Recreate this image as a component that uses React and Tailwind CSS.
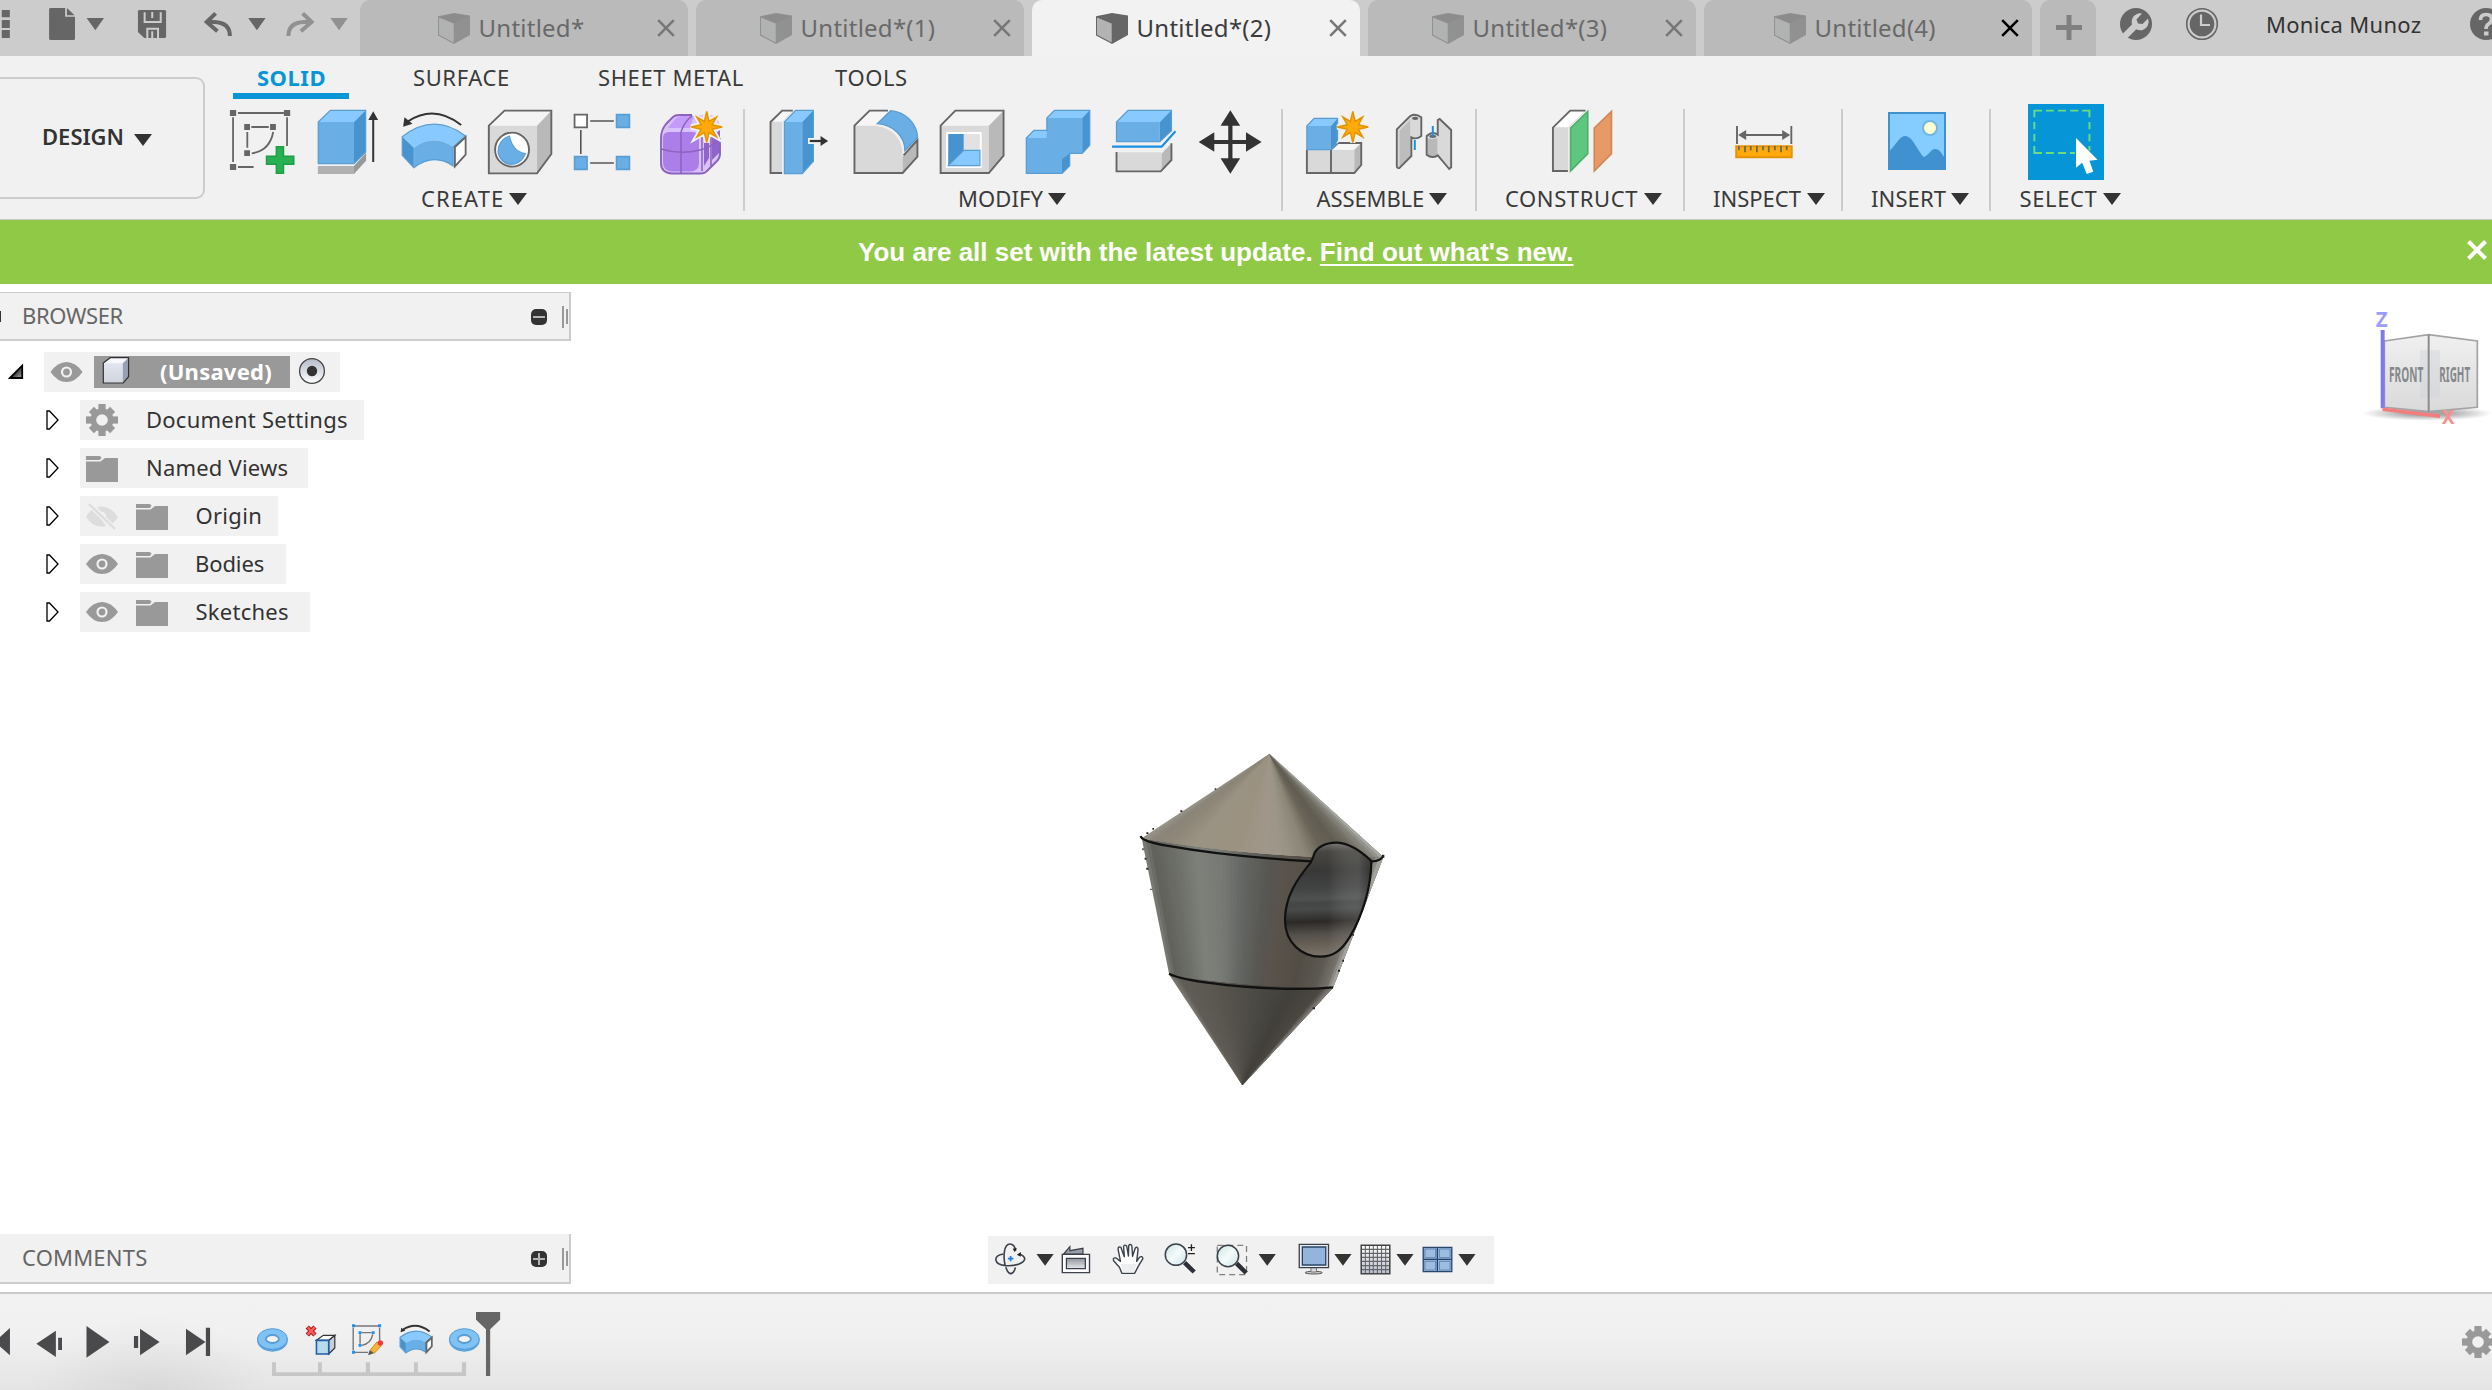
import React from 'react';

/* ---------- drawing helpers ---------- */

// An svg whose viewBox uses window coordinates, so neighbouring icons share one grid.
function Pic({ x, y, w, h, children, className = '' }) {
  return (
    <svg
      viewBox={`${x} ${y} ${w} ${h}`}
      width={w}
      height={h}
      fill="none"
      className={`block shrink-0 [&_*]:[vector-effect:non-scaling-stroke] ${className}`}
    >
      {children}
    </svg>
  );
}
const A = ({ children }) => <g transform="scale(.446429 .333333)">{children}</g>;
const B = ({ children }) => <g transform="translate(700 0) scale(.446429 .333333)">{children}</g>;
const C = ({ children }) => <g transform="translate(1300 0) scale(.382653 .333333)">{children}</g>;
const D = ({ children }) => <g transform="translate(1892 0) scale(.382653 .333333)">{children}</g>;
const E = ({ children }) => <g transform="translate(0 280) scale(.382653 .333333)">{children}</g>;
const H = ({ children }) => <g transform="translate(0 1220) scale(.382653 .333333)">{children}</g>;
const N = ({ children }) => <g transform="translate(970 1220) scale(.344388 .333333)">{children}</g>;

const GR = '#666666';
const BF = '#69afe5';
const BT = '#88caff';
const BS = '#4693d0';
const BL = '#5a9dd2';

function starPath(cx, cy) {
  const pts = [];
  for (let i = 0; i < 16; i++) {
    const r = i % 2 ? 6 : i % 4 === 0 ? 15.5 : 14;
    const a = (i * Math.PI) / 8 - Math.PI / 2;
    pts.push(`${(cx + r * Math.cos(a)).toFixed(2)} ${(cy + r * Math.sin(a)).toFixed(2)}`);
  }
  return `M${pts.join('L')}Z`;
}
const Star = ({ cx, cy }) => (
  <>
    <path d={starPath(cx, cy)} stroke="#f1f1f1" strokeWidth="5" />
    <path d={starPath(cx, cy)} fill="#ffaa0a" stroke="#e59400" strokeWidth="1.5" />
  </>
);

const Caret = ({ className = 'text-[#333333]' }) => (
  <svg width="18" height="12" viewBox="0 0 18 12" className={`block shrink-0 ${className}`}>
    <path d="M0 0H18L9 12Z" fill="currentColor" />
  </svg>
);

/* ---------- title bar ---------- */

const TABS = [
  { name: 'Untitled*', pad: 'pl-[78px]' },
  { name: 'Untitled*(1)', pad: 'pl-[64px]' },
  { name: 'Untitled*(2)', pad: 'pl-[64px]', active: true },
  { name: 'Untitled*(3)', pad: 'pl-[64px]' },
  { name: 'Untitled(4)', pad: 'pl-[70px]', darkClose: true },
];

function DocTab({ name, pad, active, darkClose }) {
  return (
    <div
      className={`mr-2 flex h-14 w-[328px] shrink-0 items-start rounded-t-[10px] pr-[13px] ${pad} ${
        active ? 'bg-[#f2f2f2] text-[#3c3c3c]' : 'bg-[#bababa] text-[#696969]'
      }`}
    >
      <svg width="32" height="31" viewBox="0 0 32 31" className="mt-[13px] shrink-0">
        <path d="M0 3.2L16 0L32 2.6V22L16 31L0 22.5Z" fill={active ? '#666' : '#919191'} />
        <path d="M1 4.5L15.7 10.5V29.4L1 21.8Z" fill={active ? '#b3b3b3' : '#b1b3b2'} />
        <path d="M1 4L16 .8L31 3.2L16 10.2Z" fill={active ? '#666' : '#8c8c8c'} />
      </svg>
      <span className="ml-[8.500px] mt-[11px] text-2xl leading-[34px] tracking-[0.25px]">{name}</span>
      <svg width="18" height="18" viewBox="0 0 18 18" className="ml-auto mt-[19px] shrink-0">
        <path d="M1.2 1.2L16.8 16.8M16.8 1.2L1.2 16.8" stroke={darkClose ? '#000' : '#777'} strokeWidth="2.6" />
      </svg>
    </div>
  );
}

function TitleBar() {
  return (
    <div className="flex h-14 shrink-0 overflow-hidden bg-[#cccccc]">
      <Pic x={0} y={0} w={30} h={56}>
        <A><path d="M4 30H22V52H4ZM4 60H22V84H4ZM4 90H22V114H4Z" fill={GR} /></A>
      </Pic>
      <Pic x={30} y={0} w={90} h={56}>
        <A>
          <path d="M114 24H146V50H168V116Q168 120 164 120H114Q110 120 110 116V28Q110 24 114 24Z" fill={GR} />
          <path d="M150 24L167 46H150Z" fill={GR} />
          <path d="M194 54H233L213.500 91Z" fill={GR} />
        </A>
      </Pic>
      <Pic x={120} y={0} w={70} h={56}>
        <A>
          <path d="M309 34Q309 30 313 30H368Q372 30 372 34V110Q372 114 368 114H323L309 96Z" fill={GR} />
          <path d="M324 37V66H360V37M341 36V54M330 114V86H354V114M341 94V114" stroke="#ccc" strokeWidth="2" />
        </A>
      </Pic>
      <Pic x={190} y={0} w={90} h={56}>
        <A>
          <path d="M483 40L463 66L487 94M464 66H480Q515 68 515 108" stroke={GR} strokeWidth="4" />
          <path d="M556 54H595L575.500 91Z" fill={GR} />
        </A>
      </Pic>
      <Pic x={280} y={0} w={80} h={56}>
        <A>
          <path d="M678 40L698 66L674 94M697 66H681Q646 68 646 108" stroke="#919191" strokeWidth="4" />
          <path d="M740 54H779L759.500 91Z" fill="#919191" />
        </A>
      </Pic>
      {TABS.map((t) => (
        <DocTab key={t.name} {...t} />
      ))}
      <div className="flex h-14 w-14 shrink-0 justify-center rounded-t-[10px] bg-[#bababa] pl-0.5 pt-[15px]">
        <svg width="26" height="25" viewBox="0 0 26 25"><path d="M10.500 0H15.500V10H26V15H15.500V25H10.500V15H0V10H10.500Z" fill="#808080" /></svg>
      </div>
      <Pic x={2096} y={0} w={70} h={56}>
        <circle cx="2136" cy="24" r="16" fill={GR} />
        <path d="M2123 38L2135 26" stroke="#ccc" strokeWidth="6.500" strokeLinecap="round" />
        <path d="M2142 13.500L2136.500 19.500L2138 23.500L2142.500 24L2148 18.500A8.500 8.500 0 1 1 2142 13.500Z" fill="#ccc" />
      </Pic>
      <Pic x={2166} y={0} w={100} h={56}>
        <circle cx="2202" cy="24" r="15.300" stroke={GR} strokeWidth="1.600" />
        <circle cx="2202" cy="24" r="12.300" fill={GR} />
        <path d="M2201 14.500V25H2210" stroke="#ccc" strokeWidth="2.200" />
      </Pic>
      <span className="mt-[7px] w-[204px] shrink-0 text-[22px] leading-[34px] tracking-[0.3px] text-[#333333]">Monica Munoz</span>
      <Pic x={2470} y={0} w={22} h={56}>
        <circle cx="2486" cy="24" r="16" fill={GR} />
        <path d="M2480.500 20Q2480.500 14.500 2486 14.500Q2491.500 14.500 2491.500 19Q2491.500 22 2488.500 24Q2486 25.500 2486 29" stroke="#ccc" strokeWidth="3.600" />
        <path d="M2484 31.500H2488.500V35.500H2484Z" fill="#ccc" />
      </Pic>
    </div>
  );
}

/* ---------- ribbon icons ---------- */

const SketchIcon = () => (
  <Pic x={205} y={104} w={105} h={78}>
    <A>
      <path d="M533 339H636M522 352V486M643 352V438M533 501H568M563 381H602M554 396V443M612 396C607 432 590 455 564 460" stroke={GR} strokeWidth="1.800" />
      <path d="M515 330H529V348H515ZM636 330H650V348H636ZM515 492H529V510H515ZM547 372H560V390H547ZM605 372H618V390H605ZM547 451H560V468H547Z" fill={GR} />
      <path d="M619 440H635V469H658V493H635V520H619V493H597V469H619Z" fill="#28b052" stroke="#1f9e46" strokeWidth="1.500" />
    </A>
  </Pic>
);
const ExtrudeIcon = () => (
  <Pic x={310} y={104} w={82} h={78}>
    <A>
      <path d="M712 498H793V522H712Z" fill="#b1b1b1" />
      <path d="M793 498L820 458V482L793 522Z" fill="#999" />
      <path d="M713 366H793V491H713Z" fill={BF} />
      <path d="M713 366L740 331H819L793 366Z" fill={BT} />
      <path d="M793 366L819 331V456L793 491Z" fill={BS} />
      <path d="M713 366L740 331H819V456L793 491H713Z" stroke={BL} strokeWidth="1.300" />
      <path d="M836 355V486" stroke="#333" strokeWidth="2" />
      <path d="M836 334L847 360H825Z" fill="#333" />
    </A>
  </Pic>
);
const RevolveShape = () => (
  <>
    <path d="M901 410Q972 336 1043 408L1015 441Q972 400 927 443Z" fill={BT} />
    <path d="M901 410L927 443V503L901 466Z" fill={BS} />
    <path d="M927 443Q972 400 1015 441V498Q972 458 927 503Z" fill={BF} />
    <path d="M901 410Q972 336 1043 408L1015 441V498Q972 458 927 503L901 466Z" stroke={BL} strokeWidth="1.200" />
    <path d="M1019 441L1043 411V464L1019 499Z" fill="#fff" stroke={GR} strokeWidth="1.800" />
    <path d="M1033 375Q973 312 914 364" stroke="#333" strokeWidth="2" />
    <path d="M903 380L906 352L924 371Z" fill="#333" />
  </>
);
const RevolveIcon = () => (
  <Pic x={392} y={104} w={86} h={78}><A><RevolveShape /></A></Pic>
);
const HoleIcon = () => (
  <Pic x={478} y={104} w={86} h={78}>
    <A>
      <path d="M1095 377L1130 332H1235L1203 377Z" fill="#f4f4f4" />
      <path d="M1095 377H1203V520H1095Z" fill="#d9d9d9" />
      <path d="M1203 377L1235 332V462L1203 520Z" fill="#b9b9b9" />
      <path d="M1095 377L1130 332H1235V462L1203 520H1095Z" stroke={GR} strokeWidth="1.900" />
      <ellipse cx="1147" cy="449" rx="38" ry="51" fill="#fff" stroke={GR} strokeWidth="1.900" />
      <path d="M1141 408C1146 440 1158 456 1177 461C1166 495 1141 503 1124 480C1108 456 1117 418 1141 408Z" fill={BF} stroke={BL} strokeWidth="1.200" />
    </A>
  </Pic>
);
const PatternIcon = () => (
  <Pic x={564} y={104} w={82} h={78}>
    <A>
      <path d="M1287 344H1315V382H1287Z" fill="#fff" stroke={GR} strokeWidth="1.800" />
      <path d="M1322 363H1375M1301 390V462M1322 489H1375" stroke="#555" strokeWidth="1.600" />
      <path d="M1381 344H1410V382H1381ZM1287 470H1315V508H1287ZM1381 470H1410V508H1381Z" fill={BF} stroke={BL} strokeWidth="1.600" />
    </A>
  </Pic>
);
const FormIcon = () => (
  <Pic x={646} y={104} w={97} h={78}>
    <path d="M661 138Q661 130 666 124L673 117Q675 115 679 115H712Q720 118 720 128V154Q720 158 717 161L707 171Q705 173.500 700 173.500H672Q661 173 661 163Z" fill="#d9c2fb" />
    <path d="M663 138Q663 132 669 132H692Q699 132 699 138V163Q699 171.500 690 171.500H672Q663 171 663 162Z" fill="#ab7eea" />
    <path d="M668 128L675 119Q678 116 682 116H694L690 128Z" fill="#c49afb" />
    <path d="M704 139L709 135V158L704 166ZM712 137L720 130V152L712 160Z" fill="#9064cc" />
    <path d="M661 149Q680 155 700 150Q712 147 720 139M681 132V173M681 132Q684 122 692 116M702 136V171M711 134V166" stroke="#8a63bf" strokeWidth="1.500" />
    <path d="M661 138Q661 130 666 124L673 117Q675 115 679 115H692M720 138V154Q720 158 717 161L707 171Q705 173.500 700 173.500H672Q661 173 661 163V138" stroke="#8a63bf" strokeWidth="1.900" />
    <Star cx={706.700} cy={127} />
  </Pic>
);
const PressPullIcon = () => (
  <Pic x={745} y={104} w={95} h={78}>
    <B>
      <path d="M158 366L184 332H208L184 366V519H158Z" fill="#d9d9d9" />
      <path d="M160 365L185 334H206L184 365Z" fill="#f6f6f6" />
      <path d="M208 332H184L158 366V519H184" stroke={GR} strokeWidth="1.900" />
      <path d="M189 366H229V521H189Z" fill={BF} />
      <path d="M189 366L214 331H254L229 366Z" fill={BT} />
      <path d="M229 366L254 331V484L229 521Z" fill={BS} />
      <path d="M189 366L214 331H254V484L229 521H189Z" stroke={BL} strokeWidth="1.200" />
      <path d="M242 423H276" stroke="#f1f1f1" strokeWidth="6" />
      <path d="M246 423H274" stroke="#333" strokeWidth="2.200" />
      <path d="M287 423L270 408V438Z" fill="#333" />
    </B>
  </Pic>
);
const FilletIcon = () => (
  <Pic x={840} y={104} w={90} h={78}>
    <B>
      <path d="M346 377L380 332H421L396 377Z" fill="#f6f6f6" />
      <path d="M346 377H394Q453 390 454 468V519H346Z" fill="#d9d9d9" />
      <path d="M454 470L487 422V470L454 519Z" fill="#b9b9b9" />
      <path d="M421 332H380L346 377V519H454L487 470V420L456 466" stroke={GR} strokeWidth="1.900" />
      <path d="M397 371L427 332C462 336 487 374 487 413L459 452C459 408 432 374 397 371Z" fill={BF} stroke={BL} strokeWidth="1.300" />
    </B>
  </Pic>
);
const ShellIcon = () => (
  <Pic x={930} y={104} w={84} h={78}>
    <B>
      <path d="M539 377L572 332H680L647 377Z" fill="#f4f4f4" />
      <path d="M539 377H647V519H539Z" fill="#d9d9d9" />
      <path d="M647 377L680 332V467L647 519Z" fill="#b9b9b9" />
      <path d="M539 377L572 332H680V467L647 519H539Z" stroke={GR} strokeWidth="1.900" />
      <path d="M551 396H631V504H551Z" fill="#fff" />
      <path d="M556 402H591V451L556 497Z" fill={BS} />
      <path d="M591 402H627V451H591Z" fill="#e2e2e2" />
      <path d="M556 497L591 451H627V497Z" fill={BT} stroke={BL} strokeWidth="1.200" />
    </B>
  </Pic>
);
const CombineIcon = () => (
  <Pic x={1014} y={104} w={90} h={78}>
    <B>
      <path d="M731 414L748 391H777V354L794 331H873V436L856 460H828V497L811 520H731Z" fill={BF} />
      <path d="M731 414L748 391H777L776 414ZM777 354L794 331H873L857 354Z" fill={BT} />
      <path d="M857 354L873 331V436L857 460ZM811 478L828 460V497L811 520Z" fill={BS} />
      <path d="M731 414L748 391H777V354L794 331H873V436L856 460H828V497L811 520H731Z" stroke={BL} strokeWidth="1.300" />
    </B>
  </Pic>
);
const SplitIcon = () => (
  <Pic x={1104} y={104} w={82} h={78}>
    <B>
      <path d="M933 366H1030V425H933Z" fill={BF} />
      <path d="M933 366L959 331H1056L1030 366Z" fill={BT} />
      <path d="M1030 366L1056 331V392L1030 425Z" fill={BS} />
      <path d="M933 366L959 331H1056V392L1030 425H933Z" stroke={BL} strokeWidth="1.300" />
      <path d="M923 440H1034L1065 394" stroke="#1b8fe0" strokeWidth="2.200" />
      <path d="M933 457H1034V514H933Z" fill="#d9d9d9" />
      <path d="M1034 461L1056 430V480L1034 514Z" fill="#b9b9b9" />
      <path d="M933 456V514H1032L1056 480V430" stroke={GR} strokeWidth="1.900" />
    </B>
  </Pic>
);
const MoveIcon = () => (
  <Pic x={1186} y={104} w={95} h={78}>
    <B>
      <path d="M1188 360V490M1140 426H1235" stroke="#333" strokeWidth="4.200" />
      <path d="M1188 331L1210 377H1166ZM1188 521L1210 475H1166ZM1117 426L1152 397V455ZM1258 426L1223 397V455Z" fill="#333" />
    </B>
  </Pic>
);
const ComponentIcon = () => (
  <Pic x={1283} y={104} w={105} h={78}>
    <C>
      <path d="M18 449H142V519H18Z" fill="#d9d9d9" />
      <path d="M82 449L99 429H160L142 449Z" fill="#f6f6f6" />
      <path d="M142 449L160 429V495L142 519Z" fill="#b9b9b9" />
      <path d="M18 449V519H142L160 495V429H99L81 449V519" stroke={GR} strokeWidth="1.900" />
      <path d="M18 378H81V449H18Z" fill={BF} />
      <path d="M18 378L37 355H98L81 378Z" fill={BT} />
      <path d="M81 378L98 355V428L81 449Z" fill={BS} />
      <path d="M18 378L37 355H98V428L81 449H18Z" stroke={BL} strokeWidth="1.300" />
    </C>
    <Star cx={1352.800} cy={127} />
  </Pic>
);
const JointIcon = () => (
  <Pic x={1388} y={104} w={87} h={78}>
    <C>
      <path d="M253 388L288 346Q302 339 316 350V410Q303 420 291 412V468L260 505Q253 507 253 500Z" fill="#d9d9d9" />
      <path d="M260 392L288 360V468L260 503Z" fill="#bdbdbd" />
      <path d="M253 388L288 348Q302 339 317 352V408Q304 420 291 412V468L260 504Q253 506 253 498Z" stroke={GR} strokeWidth="1.900" />
      <ellipse cx="301" cy="355" rx="8" ry="5" fill={GR} />
      <path d="M300 420V450" stroke="#1b8fe0" strokeWidth="2" />
      <path d="M331 408Q346 394 361 404V360L366 358L395 392V500L391 506L361 466Q345 476 331 464Z" fill="#d9d9d9" />
      <path d="M333 414Q345 420 359 414V466Q345 474 333 464Z" fill="#b9b9b9" />
      <path d="M331 408Q346 392 360 404V360L365 357L395 390V502L390 507L360 466Q345 477 331 464Z" stroke={GR} strokeWidth="1.900" />
      <ellipse cx="347" cy="409" rx="9" ry="5" fill={GR} />
      <path d="M347 378V410" stroke="#1b8fe0" strokeWidth="2" />
    </C>
  </Pic>
);
const PlaneIcon = () => (
  <Pic x={1477} y={104} w={206} h={78}>
    <C>
      <path d="M661 383L706 332H746L701 383V513H661Z" fill="#d9d9d9" />
      <path d="M663 382L707 334H744L700 382Z" fill="#fff" />
      <path d="M746 332H706L661 383V513H700" stroke={GR} strokeWidth="1.900" />
      <path d="M707 384L752 334V461L707 513Z" fill="#5cc77d" stroke="#4fae6e" strokeWidth="1.600" />
      <path d="M769 384L814 334V461L769 513Z" fill="#e89a66" stroke="#cf8757" strokeWidth="1.600" />
    </C>
  </Pic>
);
const MeasureIcon = () => (
  <Pic x={1685} y={104} w={156} h={78}>
    <C>
      <path d="M1142 378V432M1284 378V432M1155 405H1270" stroke={GR} strokeWidth="1.900" />
      <path d="M1145 405L1166 390V420ZM1281 405L1260 390V420Z" fill={GR} />
      <path d="M1140 439H1285V472H1140Z" fill="#ffaa0a" stroke="#e59400" strokeWidth="2" />
      <path d="M1147 438V451M1163 438V457M1178 438V451M1194 438V457M1210 438V451M1225 438V457M1241 438V451M1257 438V457M1272 438V451" stroke={GR} strokeWidth="1.700" />
    </C>
  </Pic>
);
const ImageIcon = () => (
  <Pic x={1843} y={104} w={146} h={78}>
    <path d="M1888 112H1946V170H1888Z" fill="#85ccff" />
    <path d="M1888 152C1895 147 1899 136 1905 136C1913 136 1918 152 1924 157C1928 156 1931 149 1935 149C1939 149 1941 152 1946 160V170H1888Z" fill="#3f92cf" />
    <path d="M1889 113H1945V169H1889Z" stroke="#3f92cf" strokeWidth="2" />
    <circle cx="1930" cy="128" r="7" fill="#ffffd2" stroke="#73b6e4" strokeWidth="2" />
  </Pic>
);
const SelectIcon = () => (
  <Pic x={1991} y={104} w={150} h={78}>
    <path d="M2028 104H2104V180H2028Z" fill="#0696d7" />
    <D>
      <path d="M372 352V332H392M402 332H423M434 332H455M466 332H487M497 332H516V352M516 366V388M516 402V424M516 438V452M372 366V388M372 402V424M372 438V459H392M402 459H423M434 459H455M465 459H478" stroke="#6ddc7e" strokeWidth="1.900" />
      <path d="M481 414L537 479L516 482L526 515L509 522L497 488L481 503Z" fill="#fff" />
    </D>
  </Pic>
);

const GROUPS = [
  { label: 'CREATE', w: 'w-[538px]', pad: 'pl-[216px]', text: 'w-[88px] tracking-[1.1px]', icons: [SketchIcon, ExtrudeIcon, RevolveIcon, HoleIcon, PatternIcon, FormIcon] },
  { label: 'MODIFY', w: 'w-[536px]', pad: 'pl-[213px]', text: 'w-[90px] tracking-[0.1px]', icons: [PressPullIcon, FilletIcon, ShellIcon, CombineIcon, SplitIcon, MoveIcon] },
  { label: 'ASSEMBLE', w: 'w-[192px]', pad: 'pl-[33.500px]', text: 'w-[112px] tracking-[-0.1px]', icons: [ComponentIcon, JointIcon] },
  { label: 'CONSTRUCT', w: 'w-[206px]', pad: 'pl-[28px]', text: 'w-[139px] tracking-[0.6px]', icons: [PlaneIcon] },
  { label: 'INSPECT', w: 'w-[156px]', pad: 'pl-[28px]', text: 'w-[94px]', icons: [MeasureIcon] },
  { label: 'INSERT', w: 'w-[146px]', pad: 'pl-[28px]', text: 'w-[80px] tracking-[0.1px]', icons: [ImageIcon] },
  { label: 'SELECT', w: 'w-[150px]', pad: 'pl-[28.500px]', text: 'w-[83px] tracking-[0.6px]', icons: [SelectIcon] },
];

function Ribbon() {
  return (
    <div className="flex h-[164px] shrink-0 border-b border-[#c8c8c8] bg-[#f1f1f1] text-[22px] text-[#3a3a3a]">
      <div className="mt-[21px] flex h-[122px] w-[205px] shrink-0 items-center rounded-r-[9px] border-2 border-l-0 border-[#cccccc] pl-[42px] font-semibold text-[#333333]">
        <span className="mt-[-3px] w-[92px]">DESIGN</span>
        <Caret className="mt-[4px] text-[#333333]" />
      </div>
      <div className="flex flex-col">
        <div className="flex h-12 items-start leading-[42px]">
          <div className="ml-[28px] h-[43px] w-[116px] border-b-[6px] border-[#0696d7] pl-px text-center font-bold tracking-[0.5px] text-[#0696d7]">SOLID</div>
          <span className="ml-[64px] w-[185px] tracking-[0.6px]">SURFACE</span>
          <span className="w-[237px] tracking-[0.6px]">SHEET METAL</span>
          <span className="tracking-[0.6px]">TOOLS</span>
        </div>
        <div className="flex">
          {GROUPS.map((g, i) => (
            <div key={g.label} className="flex">
              {i > 0 && <div className="mt-[5px] h-[102px] w-0.5 bg-[#cccccc]" />}
              <div className={g.w}>
                <div className="flex">
                  {g.icons.map((Icon, k) => (
                    <Icon key={k} />
                  ))}
                </div>
                <div className={`flex h-[33px] items-center ${g.pad}`}>
                  <span className={g.text}>{g.label}</span>
                  <Caret />
                </div>
              </div>
            </div>
          ))}
        </div>
      </div>
    </div>
  );
}

/* ---------- browser tree ---------- */

function Eye({ x, y }) {
  return (
    <g transform={`translate(${x} ${y})`}>
      <path d="M0 10Q7 0 16 0Q25 0 32 10Q25 20 16 20Q7 20 0 10Z" fill="#999" />
      <circle cx="16" cy="10" r="4.500" stroke="#f1f1f1" strokeWidth="2.200" />
    </g>
  );
}
const EyeIcon = () => <svg width="32" height="20" viewBox="0 0 32 20" fill="none" className="shrink-0"><Eye x={0} y={0} /></svg>;
const HiddenIcon = () => (
  <svg width="32" height="27" viewBox="0 0 32 27" fill="none" className="shrink-0">
    <path d="M0 14Q3 8 8 5.500L20 23Q8 26 0 14ZM11 4Q23 1 32 14Q29 19 25 21.500L20 15Q21 9 15 8.500Z" fill="#dddddd" />
    <path d="M3 1L29 26" stroke="#f1f1f1" strokeWidth="5" />
    <path d="M3 1L29 26" stroke="#dddddd" strokeWidth="2.400" />
  </svg>
);
const FolderIcon = () => (
  <svg width="32" height="26" viewBox="0 0 32 26" className="mt-0.5 shrink-0">
    <path d="M0 0H13Q15 0 15.500 1.500L14 4H0ZM0 5.500H14.500L19 2H32V26H0Z" fill="#999" />
  </svg>
);
const GearIcon = ({ className = '' }) => (
  <svg width="32" height="32" viewBox="-16 -16 32 32" className={`shrink-0 ${className}`}>
    {[0, 45, 90, 135].map((a) => (
      <rect key={a} x="-3.600" y={a % 90 ? -15 : -16} width="7.200" height={a % 90 ? 30 : 32} transform={`rotate(${a})`} fill="#999" />
    ))}
    <circle r="11.500" fill="#999" />
    <circle r="5.800" fill="#f1f1f1" />
  </svg>
);
const Twisty = () => (
  <svg width="13" height="20" viewBox="0 0 13 20" className="ml-[45.500px] mr-[21.500px] shrink-0" fill="#fff">
    <path d="M1 1H3.500L12 10L3.500 19H1Z" stroke="#000" strokeWidth="1.300" />
  </svg>
);

const NODES = [
  { name: 'Document Settings', w: 'w-[284px]', text: 'ml-[28px] tracking-[0.25px]', icons: [GearIcon] },
  { name: 'Named Views', w: 'w-[228px]', text: 'ml-[28px] tracking-[0.2px]', icons: [FolderIcon] },
  { name: 'Origin', w: 'w-[198px]', text: 'ml-[27.500px] tracking-[0.3px]', icons: [HiddenIcon, FolderIcon] },
  { name: 'Bodies', w: 'w-[206px]', text: 'ml-[27px] tracking-[-0.1px]', icons: [EyeIcon, FolderIcon] },
  { name: 'Sketches', w: 'w-[230px]', text: 'ml-[27.500px] tracking-[0.25px]', icons: [EyeIcon, FolderIcon] },
];

function PanelHeader({ title, className, text, plus, tab }) {
  return (
    <div className={`flex w-[571px] shrink-0 items-center border-b-2 border-r-2 border-[#cccccc] bg-[#f1f1f1] text-[22px] text-[#666666] ${className}`}>
      <div className={`h-[11px] w-px ${tab ? 'bg-[#333333]' : ''}`} />
      <span className={`-mt-px ml-[21px] ${text}`}>{title}</span>
      <svg width="16" height="16" viewBox="0 0 16 16" className="ml-auto mr-[15px] mt-px">
        <rect width="16" height="16" rx="5" fill="#333" />
        <path d={plus ? 'M2 8H14M8 2V14' : 'M2 8H14'} stroke="#b5b5b5" strokeWidth="2" />
      </svg>
      <div className="mt-px h-[22px] w-0.5 bg-[#999999]" />
      <div className="ml-[2px] mr-px mt-px h-[15px] w-0.5 bg-[#999999]" />
    </div>
  );
}

function Tree() {
  return (
    <div className="mt-[11px] flex flex-col gap-2 text-[22px] text-[#333333]">
      <div className="flex h-10 items-center">
        <Pic x={0} y={352} w={44} h={40}>
          <defs>
            <linearGradient id="tw" x1="0" y1="0" x2="1" y2="1"><stop offset="0.300" stopColor="#111" /><stop offset="1" stopColor="#aaa" /></linearGradient>
          </defs>
          <E><path d="M26 294L58 257V294Z" fill="url(#tw)" stroke="#000" strokeWidth="1.800" /></E>
        </Pic>
        <div className="flex h-10 w-[296px] items-center bg-[#f1f1f1]">
          <Pic x={44} y={352} w={50} h={40}><Eye x={50.500} y={362} /></Pic>
          <div className="flex h-8 w-[196px] items-center bg-[#999999]">
            <Pic x={94} y={356} w={64} h={32}>
              <defs>
                <linearGradient id="bx" x1="0" y1="0" x2="0" y2="1"><stop offset="0" stopColor="#e8ebf2" /><stop offset="1" stopColor="#cfd4de" /></linearGradient>
              </defs>
              <E>
                <path d="M270 249L288 233H336V290L322 309H270Z" fill="url(#bx)" />
                <path d="M272 250L289 234H335L321 250Z" fill="#f8f9fc" />
                <path d="M321 250L335 234V290L321 307Z" fill="#98a0b4" />
                <path d="M270 249L288 233H336V290L322 309H270Z" stroke="#333" strokeWidth="1.200" />
              </E>
            </Pic>
            <span className="-mt-px ml-[2px] font-bold tracking-[0.25px] text-white">(Unsaved)</span>
          </div>
          <Pic x={290} y={352} w={50} h={40}>
            <defs>
              <linearGradient id="rd" x1="0" y1="0" x2="0" y2="1"><stop offset="0" stopColor="#b4bac8" /><stop offset="1" stopColor="#ffffff" /></linearGradient>
            </defs>
            <circle cx="312" cy="371" r="12.400" fill="url(#rd)" stroke="#444" strokeWidth="1.300" />
            <circle cx="312" cy="371" r="5.200" fill="#333" />
          </Pic>
        </div>
      </div>
      {NODES.map((n) => (
        <div key={n.name} className="flex h-10 items-center">
          <Twisty />
          <div className={`flex h-10 items-center bg-[#f1f1f1] pl-1.5 ${n.w}`}>
            <div className="flex items-center gap-[18px]">
              {n.icons.map((Icon, k) => (
                <Icon key={k} />
              ))}
            </div>
            <span className={`-mt-px whitespace-nowrap ${n.text}`}>{n.name}</span>
          </div>
        </div>
      ))}
    </div>
  );
}

/* ---------- 3D model ---------- */

function mix(stops, t) {
  let i = 0;
  while (i < stops.length - 2 && t > stops[i + 1][0]) i++;
  const [t0, a] = stops[i];
  const [t1, b] = stops[i + 1];
  const k = Math.min(1, Math.max(0, (t - t0) / (t1 - t0)));
  return `rgb(${a.map((v, j) => Math.round(v + (b[j] - v) * k)).join(',')})`;
}
// Fills a ruled surface between two curves with overlapping shaded strips.
function Ruled({ from, to, stops }) {
  const n = 60;
  return Array.from({ length: n }, (_, i) => {
    const a = i / n;
    const b = Math.min(1, (i + 4) / n);
    const p = [from(a), from(b), to(b), to(a)];
    return <path key={i} d={`M${p.map((q) => q.map((v) => v.toFixed(1)).join(' ')).join('L')}Z`} fill={mix(stops, a)} />;
  });
}
const CONE = [[0, [150, 146, 136]], [0.04, [138, 133, 121]], [0.1, [142, 135, 121]], [0.2, [154, 146, 131]], [0.38, [155, 146, 130]], [0.5, [160, 151, 138]], [0.58, [155, 149, 136]], [0.67, [139, 134, 119]], [0.75, [106, 101, 88]], [0.83, [96, 92, 81]], [0.9, [112, 109, 99]], [0.96, [140, 139, 132]], [1, [190, 190, 186]]];
const BODY = [[0, [120, 120, 115]], [0.03, [98, 98, 93]], [0.12, [108, 109, 104]], [0.22, [126, 128, 122]], [0.32, [119, 122, 117]], [0.42, [99, 101, 98]], [0.52, [88, 86, 82]], [0.6, [89, 83, 76]], [0.75, [82, 77, 69]], [0.88, [92, 89, 82]], [0.95, [115, 113, 106]], [1, [185, 185, 180]]];
const TIP = [[0, [120, 118, 112]], [0.05, [96, 93, 86]], [0.25, [90, 87, 80]], [0.48, [78, 76, 70]], [0.75, [66, 64, 58]], [0.93, [75, 72, 66]], [1, [140, 138, 133]]];

const rim = (t) => [125 + 725 * t, 325 + 122 * t - 62 * t * t + (t > 0.8 ? (0.8 - t) * 20 : 0)];
const waist = (t) => [208 + 491 * t, 735 + 76 * t - 38 * t * t];

function Model() {
  return (
    <Pic x={1100} y={730} w={320} h={380} className="absolute left-[1100px] top-[446px]">
      <defs>
        <linearGradient id="hole" gradientUnits="userSpaceOnUse" x1="660" y1="338" x2="672" y2="680">
          <stop offset="0" stopColor="#74736d" /><stop offset="0.080" stopColor="#474642" /><stop offset="0.250" stopColor="#393938" />
          <stop offset="0.400" stopColor="#424343" /><stop offset="0.490" stopColor="#4f5151" /><stop offset="0.530" stopColor="#444545" />
          <stop offset="0.580" stopColor="#484a4a" /><stop offset="0.690" stopColor="#2c2a28" /><stop offset="0.800" stopColor="#534f4a" />
          <stop offset="0.900" stopColor="#696258" /><stop offset="1" stopColor="#7b7469" />
        </linearGradient>
        <linearGradient id="sheen" x1="0" y1="0" x2="1" y2="0">
          <stop offset="0.500" stopColor="#fff" stopOpacity="0" /><stop offset="0.850" stopColor="#a0a09c" stopOpacity="0.220" /><stop offset="1" stopColor="#222" stopOpacity="0.200" />
        </linearGradient>
      </defs>
      <g transform="translate(1100 730) scale(.333333)">
        <Ruled from={waist} to={() => [427, 1066]} stops={TIP} />
        <Ruled from={rim} to={waist} stops={BODY} />
        <Ruled from={() => [508, 72]} to={rim} stops={CONE} />
        <path d="M640 380C645 352 678 337 712 338C755 341 788 368 814 393C814 470 788 555 750 620C725 662 700 680 660 680C608 680 555 640 555 570C555 500 592 446 632 398Z" fill="url(#hole)" />
        <path d="M640 380C645 352 678 337 712 338C755 341 788 368 814 393C814 470 788 555 750 620C725 662 700 680 660 680C608 680 555 640 555 570C555 500 592 446 632 398Z" fill="url(#sheen)" stroke="#111" strokeWidth="2.200" />
        <path d="M122 318Q124 334 200 347Q340 372 508 385Q570 392 634 394M816 394Q840 394 850 378" stroke="#111" strokeWidth="2.200" />
        <path d="M207 731Q240 748 340 760Q420 771 520 775Q620 780 699 772" stroke="#111" strokeWidth="2.200" />
        <path d="M344 175h5v4h-5zM241 241h6v5h-6zM157 294h5v5h-5zM139 307h6v5h-6zM127 355h4v6h-4zM134 383h5v6h-5zM139 413h6v6h-6zM151 476h4v4h-4zM757 611h5v6h-5zM727 689h5v6h-5zM714 719h6v6h-6zM638 832h7v6h-7zM846 374h7v9h-7z" fill="#222" />
      </g>
    </Pic>
  );
}

function ViewCube() {
  return (
    <Pic x={2340} y={290} w={152} h={150} className="absolute right-0 top-[6px]">
      <defs>
        <linearGradient id="vf" x1="0" y1="0" x2="0" y2="1"><stop offset="0" stopColor="#f0f0f0" /><stop offset="1" stopColor="#d9d9d9" /></linearGradient>
        <radialGradient id="vs"><stop offset="0.300" stopColor="#000" stopOpacity="0.350" /><stop offset="1" stopColor="#000" stopOpacity="0" /></radialGradient>
      </defs>
      <g transform="translate(2340 290) scale(.333333)">
        <ellipse cx="262" cy="370" rx="195" ry="22" fill="url(#vs)" />
        <path d="M133 153L266 134V365L133 352Z" fill="url(#vf)" />
        <path d="M266 134L412 153V352L266 365Z" fill="url(#vf)" />
        <path d="M240 180H300V323H240Z" fill="#cdd3dc" fillOpacity="0.400" />
        <path d="M133 153L266 134L412 153V352L266 365L133 352Z" stroke="#a3a3a3" strokeWidth="1.700" />
        <path d="M266 134V365" stroke="#8c8c8c" strokeWidth="2" />
        <path d="M128 120V355" stroke="#7c7cf0" strokeWidth="4" />
        <path d="M128 358L300 379" stroke="#f57c7c" strokeWidth="3.600" />
        <text x="107" y="112" fontSize="62" fontWeight="700" fill="#9c9cfa">Z</text>
        <text x="305" y="401" fontSize="58" fontWeight="700" fill="#f79090">X</text>
        <text transform="translate(147 276) scale(.49 1)" fontSize="62" fontWeight="700" fill="#85888c">FRONT</text>
        <text transform="translate(298 276) scale(.48 1)" fontSize="62" fontWeight="700" fill="#85888c">RIGHT</text>
      </g>
    </Pic>
  );
}

/* ---------- navigation bar ---------- */

const NAVY = '#2a4568';
function NavBar() {
  const drop = (x) => <path d={`M${x} 102H${x + 50}L${x + 25} 137Z`} fill="#333" />;
  return (
    <div className="flex h-12 w-[506px] bg-[#f1f1f1]">
      <Pic x={988} y={1236} w={70} h={48}>
        <N>
          <path d="M116 100M102 135C96 110 98 72 116 72C126 72 131 82 133 92M96 102C66 108 68 134 104 137C130 139 158 130 159 116C158 108 150 104 142 101M104 142C108 154 112 161 118 161C125 161 130 150 132 142" stroke="#3c414b" strokeWidth="1.600" />
          <path d="M124 86L136 84L130 97ZM136 104L148 96L147 110Z" fill="#222" />
          <path d="M110 116H126M118 108V124" stroke="#1b7fe0" strokeWidth="1.800" />
          {drop(193)}
        </N>
      </Pic>
      <Pic x={1058} y={1236} w={42} h={48}>
        <defs><linearGradient id="nv" x1="0" y1="0" x2="0" y2="1"><stop offset="0" stopColor="#8f949c" /><stop offset="1" stopColor="#e6e8eb" /></linearGradient></defs>
        <N>
          <path d="M272 102L290 80V92L328 85V102Z" fill="#9aa0a8" stroke="#3c414b" strokeWidth="1.200" />
          <path d="M268 103H347V158H268Z" fill="#fff" stroke="#3c414b" strokeWidth="1.400" />
          <path d="M280 115H335V146H280Z" fill="url(#nv)" stroke="#3c414b" strokeWidth="1.300" />
        </N>
      </Pic>
      <Pic x={1100} y={1236} w={56} h={48}>
        <N>
          <path d="M441 160L434 142L417 122Q414 112 424 114L437 124L430 88Q430 78 438 82L448 110L446 80Q448 72 455 78L460 108L461 76Q466 70 470 78L472 109L480 84Q486 78 488 88L484 124L492 112Q500 106 502 116L488 140L478 160Z" fill="#fff" stroke="#3c414b" strokeWidth="1.400" strokeLinejoin="round" />
          <path d="M444 157L438 132H484L476 157Z" fill="#dcdee2" fillOpacity="0.500" />
        </N>
      </Pic>
      <Pic x={1156} y={1236} w={54} h={48}>
        <defs><linearGradient id="gl" x1="0" y1="0" x2="1" y2="1"><stop offset="0" stopColor="#c9e3e0" /><stop offset="0.500" stopColor="#f4fbfa" /><stop offset="1" stopColor="#cfe3e6" /></linearGradient></defs>
        <N>
          <path d="M623 128L651 156" stroke="#2c2f36" strokeWidth="4.500" />
          <ellipse cx="598" cy="104" rx="31" ry="32" fill="url(#gl)" stroke="#3c414b" strokeWidth="1.500" />
          <path d="M633 83H653M643 73V93M633 101H653" stroke="#222" strokeWidth="1.300" />
        </N>
      </Pic>
      <Pic x={1210} y={1236} w={82} h={48}>
        <N>
          <path d="M718 76H803V164H718Z" stroke="#808080" strokeWidth="1.300" strokeDasharray="6 4" />
          <path d="M774 130L802 159" stroke="#2c2f36" strokeWidth="4.500" />
          <ellipse cx="749" cy="108" rx="31" ry="32" fill="url(#gl)" stroke="#3c414b" strokeWidth="1.500" />
          {drop(838)}
        </N>
      </Pic>
      <Pic x={1292} y={1236} w={64} h={48}>
        <N>
          <ellipse cx="998" cy="158" rx="25" ry="4" fill="#ccc" stroke="#555" strokeWidth="1" />
          <path d="M990 143H1006V156H990Z" fill="#ddd" stroke="#777" strokeWidth="1" />
          <path d="M956 73H1041V143H956Z" fill="#e9ebee" stroke="#3c414b" strokeWidth="1.300" />
          <path d="M965 81H1033V135H965Z" fill="#93b5dc" stroke={NAVY} strokeWidth="1.300" />
          {drop(1058)}
        </N>
      </Pic>
      <Pic x={1356} y={1236} w={62} h={48}>
        <defs><linearGradient id="gd" x1="0" y1="0" x2="0" y2="1"><stop offset="0" stopColor="#fff" /><stop offset="1" stopColor="#b9c0d4" /></linearGradient></defs>
        <N>
          <path d="M1136 76H1219V161H1136Z" fill="url(#gd)" />
          <path d="M1148 76V161M1160 76V161M1171 76V161M1183 76V161M1195 76V161M1207 76V161M1136 88H1219M1136 100H1219M1136 112H1219M1136 124H1219M1136 137H1219M1136 149H1219" stroke="#666" strokeWidth="1.100" />
          <path d="M1136 76H1219V161H1136Z" stroke="#444" strokeWidth="1.500" />
          {drop(1238)}
        </N>
      </Pic>
      <Pic x={1418} y={1236} w={76} h={48}>
        <N>
          <path d="M1316 82H1399V155H1316Z" fill="#93b5dc" />
          <path d="M1321 87H1352V113H1321ZM1363 87H1394V113H1363ZM1321 124H1352V150H1321ZM1363 124H1394V150H1363Z" fill="#9dbde0" stroke="#6488b5" strokeWidth="1" />
          <path d="M1316 82H1399V155H1316ZM1357 82V155M1316 118H1399" stroke={NAVY} strokeWidth="1.300" />
          {drop(1418)}
        </N>
      </Pic>
    </div>
  );
}

/* ---------- timeline ---------- */

const Torus = ({ x }) => (
  <g transform={`translate(${x} 0)`}>
    <ellipse cx="712" cy="361" rx="40" ry="34" fill="#5aa3dc" />
    <ellipse cx="712" cy="357" rx="39" ry="31" fill="#7fc2f6" stroke={BL} strokeWidth="1" />
    <ellipse cx="712" cy="357" rx="17" ry="12" fill="#f4f4f4" stroke={BL} strokeWidth="1.800" />
  </g>
);

function Timeline() {
  const G = '#4a4a4c';
  return (
    <div className="flex h-[98px] shrink-0 border-t-2 border-[#cccccc] bg-[radial-gradient(ellipse_120px_75px_at_150px_100%,rgba(0,0,0,0.055),transparent),linear-gradient(to_bottom,#f2f2f2_0%,#f0f0f0_45%,#e4e4e4_100%)]">
      <Pic x={0} y={1294} w={20} h={96}><H><path d="M26 324V406L-14 365Z" fill={G} /></H></Pic>
      <Pic x={20} y={1294} w={55} h={96}><H><path d="M146 332V411L95 371ZM152 353H162V390H152Z" fill={G} /></H></Pic>
      <Pic x={75} y={1294} w={47} h={96}><H><path d="M226 318V413L286 366Z" fill={G} /></H></Pic>
      <Pic x={122} y={1294} w={50} h={96}><H><path d="M350 348H361V384H350ZM366 326V406L417 366Z" fill={G} /></H></Pic>
      <Pic x={172} y={1294} w={50} h={96}><H><path d="M486 326V406L537 366ZM538 323H549V408H538Z" fill={G} /></H></Pic>
      <div className="ml-[28px] flex w-[226px] flex-col">
        <div className="flex">
          <Pic x={250} y={1294} w={46} h={66}><H><Torus x={0} /></H></Pic>
          <Pic x={296} y={1294} w={48} h={66}>
            <H>
              <path d="M827 361L845 346H875V384L859 402H827Z" fill="#fff" />
              <path d="M859 361L875 346V384L859 402Z" fill="#c8cdd3" stroke="#333" strokeWidth="1.200" />
              <path d="M827 361L845 346H875L859 361Z" fill="#fff" stroke="#333" strokeWidth="1.200" />
              <path d="M827 361H859V402H827Z" fill="#b5dcea" stroke="#1d5fa8" strokeWidth="1.600" />
              <path d="M803 321L823 345M823 321L803 345" stroke="#a81616" strokeWidth="4.500" />
              <path d="M804 322L822 344M822 322L804 344" stroke="#ff5d5d" strokeWidth="2.400" />
            </H>
          </Pic>
          <Pic x={344} y={1294} w={48} h={66}>
            <H>
              <path d="M928 318H988M923 323V391M992 323V362M928 397H962M946 338H970M941 343V371M974 343Q970 370 946 376" stroke="#777" strokeWidth="1.400" />
              <path d="M920 313H928V322H920ZM988 313H996V322H988ZM920 392H928V401H920ZM937 334H945V342H937ZM971 334H979V342H971ZM937 372H945V380H937Z" fill="#1b8ff0" />
              <path d="M968 390L985 366L996 378L978 400Z" fill="#fbb43a" stroke="#d18a1a" strokeWidth="1" />
              <path d="M962 406L966 390L977 400Z" fill="#555" />
              <ellipse cx="994" cy="369" rx="7" ry="8" fill="#f2383c" />
            </H>
          </Pic>
          <Pic x={392} y={1294} w={48} h={66}>
            <g transform="translate(400 1326) scale(.5) translate(-402 -114)"><A><RevolveShape /></A></g>
          </Pic>
          <Pic x={440} y={1294} w={36} h={66} className="overflow-visible"><H><Torus x={501.500} /></H></Pic>
        </div>
        <Pic x={250} y={1360} w={226} h={20}>
          <H><path d="M711 427H721V457H831V427H841V457H956V427H967V457H1082V427H1092V457H1207V427H1218V468H711Z" fill="#c6c6c6" /></H>
        </Pic>
      </div>
      <Pic x={476} y={1294} w={30} h={96}><H><path d="M1244 276H1307V299L1281 328V468H1270V328L1244 299Z" fill="#666" /></H></Pic>
      <div className="ml-auto mr-[-2px] mt-[32px]"><GearIcon /></div>
    </div>
  );
}

/* ---------- page ---------- */

export default function App() {
  return (
    <div className="flex h-screen w-screen flex-col overflow-hidden bg-white [font-family:'Noto_Sans',sans-serif]">
      <TitleBar />
      <Ribbon />
      <div className="flex h-16 shrink-0 items-center bg-[#90c946] pr-[5px] [font-family:'Liberation_Sans',Arial,sans-serif]">
        <span className="ml-[858px] text-[26px] font-bold leading-[62px] text-white">
          You are all set with the latest update.{' '}
          <span className="underline decoration-2 underline-offset-[3px]">Find out what's new.</span>
        </span>
        <svg width="20" height="20" viewBox="0 0 20 20" className="-mt-1 ml-auto">
          <path d="M1.500 1.500L18.500 18.500M18.500 1.500L1.500 18.500" stroke="#fff" strokeWidth="4" />
        </svg>
      </div>
      <div className="relative flex min-h-0 flex-1 flex-col">
        <PanelHeader title="BROWSER" className="mt-[8px] h-[49px] border-t" text="tracking-[-0.35px]" tab />
        <Tree />
        <Model />
        <ViewCube />
        <div className="mt-auto flex pb-[8px]">
          <PanelHeader title="COMMENTS" className="h-[50px]" text="tracking-[0.2px]" plus />
          <div className="ml-[417px] pt-[2px]">
            <NavBar />
          </div>
        </div>
      </div>
      <Timeline />
    </div>
  );
}
